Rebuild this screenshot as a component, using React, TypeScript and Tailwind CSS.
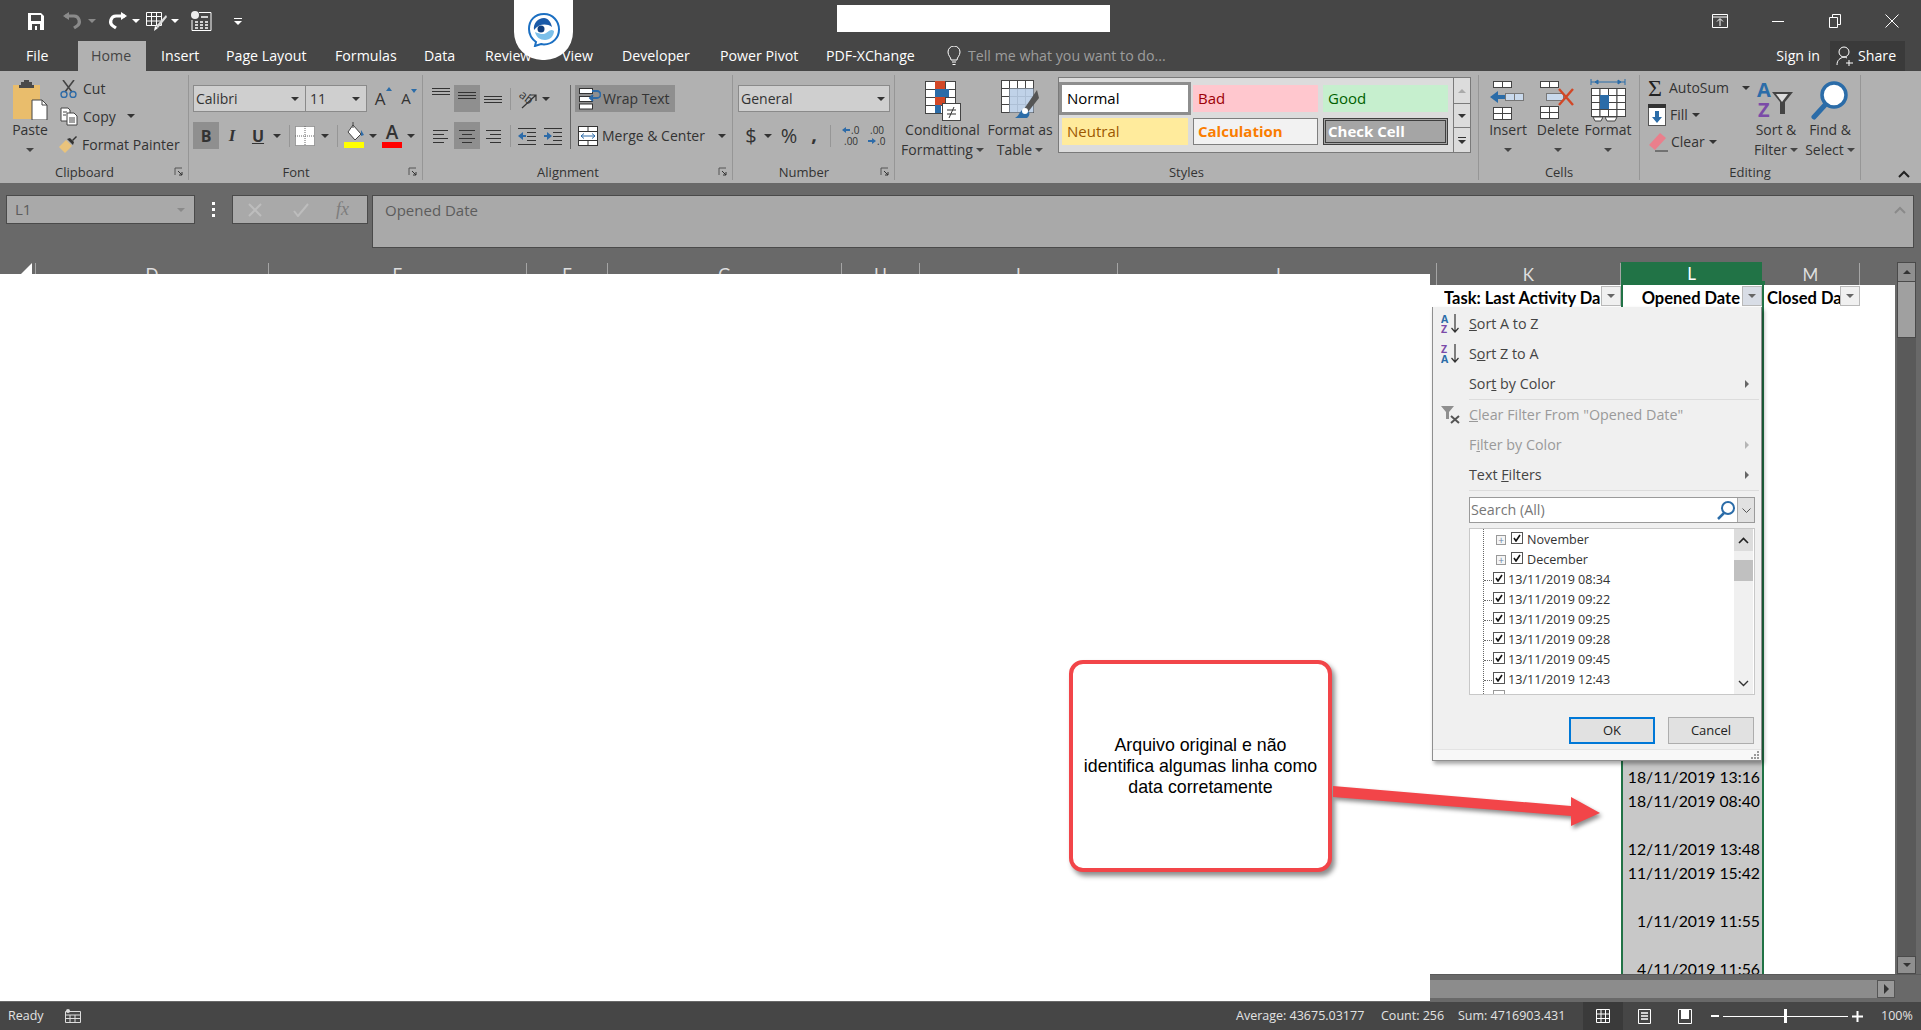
import { ReactNode } from "react";

function Caret({ className = "" }: { className?: string }) {
  return (
    <svg width="8" height="4" viewBox="0 0 8 4" className={`shrink-0 ${className}`}>
      <path d="M0 0h8L4 4z" fill="currentColor" />
    </svg>
  );
}

function Launcher() {
  return (
    <svg width="10" height="10" viewBox="0 0 10 10" className="shrink-0">
      <path d="M1 1h7M1 1v7" stroke="#555" fill="none" />
      <path d="M4 4l4 4M8 5v3H5" stroke="#333" fill="none" />
    </svg>
  );
}

function Group({ label, launcher, className, bodyClass = "", children }: { label: string; launcher?: boolean; className: string; bodyClass?: string; children: ReactNode }) {
  return (
    <div className={`flex flex-col border-r border-[#969696] ${className}`}>
      <div className={`flex-1 flex min-h-0 ${bodyClass}`}>{children}</div>
      <div className="h-[16px] flex items-center text-[13px] leading-[16px] text-[#333]">
        <span className="flex-1 text-center">{label}</span>
        {launcher && <span className="w-[19px] flex justify-center"><Launcher /></span>}
      </div>
    </div>
  );
}

function BigBtn({ icon, line1, line2, caret, className }: { icon: ReactNode; line1: string; line2?: string; caret?: boolean; className: string }) {
  return (
    <div className={`flex flex-col items-center pt-[4px] ${className}`}>
      <div className="h-[41px] flex items-center justify-center">{icon}</div>
      <div className="h-[20px] leading-[20px] whitespace-nowrap">{line1}</div>
      <div className="h-[20px] leading-[20px] whitespace-nowrap flex items-center gap-[3px]">
        {line2}
        {caret && <Caret className="text-[#444]" />}
      </div>
    </div>
  );
}

function VSep({ className = "" }: { className?: string }) {
  return <div className={`w-px h-[22px] bg-[#969696] shrink-0 ${className}`} />;
}

function AlignLines({ kind }: { kind: "top" | "mid" | "bot" | "left" | "center" | "right" }) {
  const y = kind === "top" ? [1, 4, 7] : kind === "mid" ? [5, 8, 11] : kind === "bot" ? [9, 12, 15] : [2, 6, 10, 14];
  if (kind === "top" || kind === "mid" || kind === "bot") {
    return (
      <svg width="18" height="16" viewBox="0 0 18 16">
        {y.map((v, i) => <path key={i} d={`M0 ${v}.5h18`} stroke="#333" />)}
      </svg>
    );
  }
  const xs: Record<string, number[][]> = {
    left: [[0, 15], [0, 11], [0, 15], [0, 11]],
    center: [[0, 16], [3, 13], [0, 16], [3, 13]],
    right: [[1, 16], [5, 16], [1, 16], [5, 16]],
  };
  return (
    <svg width="16" height="16" viewBox="0 0 16 16">
      {y.map((v, i) => <path key={i} d={`M${xs[kind][i][0]} ${v}.5H${xs[kind][i][1]}`} stroke="#333" />)}
    </svg>
  );
}

function WhiteGrid({ x, y, cols, rows, w, h }: { x: number; y: number; cols: number; rows: number; w: number; h: number }) {
  const cells = [];
  for (let r = 0; r < rows; r++) {
    for (let c = 0; c < cols; c++) {
      cells.push(<rect key={`${r}-${c}`} x={x + c * w + 0.5} y={y + r * h + 0.5} width={w} height={h} fill="#fff" stroke="#444" strokeWidth="1" />);
    }
  }
  return <g>{cells}</g>;
}

function PasteIcon() {
  return (
    <svg width="36" height="40" viewBox="0 0 36 40">
      <rect x="1" y="5" width="27" height="34" fill="#e9bd6c" />
      <path d="M9 5V2h3V0h5v2h3v3h2v3H7V5z" fill="#4a4a4a" />
      <path d="M20 20h10l5 5v15H20z" fill="#fff" stroke="#444" />
      <path d="M30 20v5h5" fill="none" stroke="#444" />
    </svg>
  );
}

function ScissorsIcon() {
  return (
    <svg width="18" height="18" viewBox="0 0 18 18">
      <path d="M3 0l9 12M14 0L5 12" stroke="#444" strokeWidth="1.6" />
      <circle cx="4" cy="14.5" r="3" fill="none" stroke="#2d6ba8" strokeWidth="1.4" />
      <circle cx="13" cy="14.5" r="3" fill="none" stroke="#2d6ba8" strokeWidth="1.4" />
    </svg>
  );
}

function CopyIcon() {
  return (
    <svg width="18" height="19" viewBox="0 0 18 19">
      <path d="M1 1h7l2 2v11H1z" fill="#fff" stroke="#444" />
      <path d="M7 6h7l3 3v9H7z" fill="#fff" stroke="#444" />
      <path d="M3 5h4M3 8h3M9 11h6M9 13h6M9 15h6" stroke="#444" />
    </svg>
  );
}

function BrushIcon() {
  return (
    <svg width="21" height="20" viewBox="0 0 21 20">
      <path d="M1 13l7-7 6 6-7 7z" fill="#e9c37c" />
      <path d="M9 5l3-1 4 4-1 3z" fill="#333" />
      <path d="M14 6l4-4 1 1-4 4z" fill="#333" />
    </svg>
  );
}

function FillBucketIcon() {
  return (
    <svg width="22" height="27" viewBox="0 0 22 27">
      <path d="M9 3l8 9-6 6-7-8z" fill="#fff" stroke="#444" />
      <path d="M9 0v6" stroke="#444" />
      <path d="M17 8l3 5-3 1z" fill="#2d6ba8" />
      <rect x="0" y="20" width="20" height="6" fill="#ffff00" />
    </svg>
  );
}

function OrientIcon() {
  return (
    <svg width="24" height="24" viewBox="0 0 24 24" className="overflow-visible">
      <text x="3" y="13" fontSize="12" fill="#333" transform="rotate(38 8 10)" fontFamily="Open Sans">ab</text>
      <path d="M6 21L20 8M14 8h6v6" stroke="#333" fill="none" strokeWidth="1.2" />
    </svg>
  );
}

function IndentIcon({ out }: { out?: boolean }) {
  return (
    <svg width="20" height="20" viewBox="0 0 20 20">
      {[2, 6, 10, 14, 18].map((y) => <path key={y} d={`M${y === 2 || y === 18 ? 1 : 10} ${y}.5H19`} stroke="#333" />)}
      {out ? <path d="M1 10l5-4v3h3v2H6v3z" fill="#2d6ba8" /> : <path d="M9 10L4 6v3H1v2h3v3z" fill="#2d6ba8" />}
    </svg>
  );
}

function WrapIcon() {
  return (
    <svg width="22" height="22" viewBox="0 0 22 22">
      <rect x="0.5" y="0.5" width="13" height="5" fill="#fff" stroke="#333" />
      <rect x="0.5" y="8.5" width="13" height="5" fill="#fff" stroke="#333" />
      <rect x="0.5" y="16" width="13" height="5" fill="#fff" stroke="#333" />
      <path d="M13 3h5a3 3 0 0 1 0 7h-6M14 7l-3 3 3 3" stroke="#2d6ba8" strokeWidth="1.8" fill="none" />
    </svg>
  );
}

function MergeIcon() {
  return (
    <svg width="20" height="20" viewBox="0 0 20 20">
      <rect x="0.5" y="0.5" width="19" height="19" fill="#fff" stroke="#333" />
      <path d="M.5 5.5h19M.5 14.5h19M10 .5v5M10 14.5v5" stroke="#333" />
      <path d="M3 10h14M6 7.5L3 10l3 2.5M14 7.5l3 2.5-3 2.5" stroke="#2d6ba8" fill="none" />
    </svg>
  );
}

function DecIcon({ more }: { more?: boolean }) {
  return (
    <svg width="20" height="24" viewBox="0 0 20 24" fontFamily="Open Sans" fontSize="10" fill="#333" className="overflow-visible">
      {more ? (
        <g>
          <path d="M1 6l4-3v2h4v2H5v2z" fill="#2d6ba8" />
          <text x="10" y="10">.0</text>
          <text x="3" y="21">.00</text>
        </g>
      ) : (
        <g>
          <text x="3" y="10">.00</text>
          <path d="M9 17l-4 3v-2H1v-2h4v-2z" fill="#2d6ba8" />
          <text x="10" y="21">.0</text>
        </g>
      )}
    </svg>
  );
}

function CondIcon() {
  return (
    <svg width="38" height="42" viewBox="0 0 38 42">
      <WhiteGrid x={1} y={2} cols={3} rows={4} w={10} h={8} />
      <rect x="11" y="2" width="10" height="8" fill="#d24726" />
      <rect x="11" y="10" width="14" height="8" fill="#2b6ca8" />
      <rect x="11" y="18" width="10" height="8" fill="#d24726" />
      <rect x="11" y="26" width="6" height="8" fill="#2b6ca8" />
      <rect x="18.5" y="24.5" width="18" height="17" fill="#fff" stroke="#444" />
      <path d="M23 31h9M23 35h9M30 28l-5 11" stroke="#333" />
    </svg>
  );
}

function TableIcon() {
  return (
    <svg width="40" height="42" viewBox="0 0 40 42">
      <WhiteGrid x={1} y={1} cols={4} rows={4} w={8} h={8} />
      <rect x="9.5" y="9.5" width="24" height="24" fill="#b9cde6" opacity="0.9" />
      <path d="M37 11L24 30l4 3 11-14z" fill="#555" />
      <path d="M24 30c-4 1-4 6-9 9h12c3-2 3-5 1-7z" fill="#2b6ca8" />
      <circle cx="25" cy="32" r="3" fill="#fff" />
    </svg>
  );
}

function InsertIcon() {
  return (
    <svg width="38" height="42" viewBox="0 0 38 42">
      <WhiteGrid x={4} y={2} cols={2} rows={1} w={9} h={6} />
      <WhiteGrid x={4} y={28} cols={2} rows={2} w={9} h={6} />
      <rect x="16.5" y="14.5" width="18" height="7" fill="#c9d9ec" stroke="#777" />
      <path d="M25.5 14.5v7" stroke="#777" />
      <path d="M1 18l8-6v4h7v4H9v4z" fill="#2b6ca8" />
    </svg>
  );
}

function DeleteIcon() {
  return (
    <svg width="38" height="42" viewBox="0 0 38 42">
      <WhiteGrid x={1} y={2} cols={2} rows={1} w={9} h={6} />
      <WhiteGrid x={1} y={27} cols={2} rows={2} w={9} h={6} />
      <rect x="7.5" y="14.5" width="17" height="7" fill="#c9d9ec" stroke="#777" />
      <path d="M20 10l14 16M34 10L20 26" stroke="#d24726" strokeWidth="2.4" />
    </svg>
  );
}

function FormatIcon() {
  return (
    <svg width="36" height="44" viewBox="0 0 36 44">
      <path d="M1 4h34M1 1v6M35 1v6M5 4l3-2v4zM31 4l-3-2v4z" stroke="#2b6ca8" fill="#2b6ca8" strokeWidth="1" />
      <WhiteGrid x={1} y={10} cols={4} rows={4} w={8.5} h={7} />
      <rect x="10" y="17" width="9" height="14" fill="#2b6ca8" />
      <path d="M3 39h10l-2 4H5zM15 39h12l-2 4H17z" fill="#fff" stroke="#444" />
    </svg>
  );
}

function FillDownIcon() {
  return (
    <svg width="18" height="22" viewBox="0 0 18 22">
      <rect x="0.5" y="0.5" width="17" height="21" fill="#fff" stroke="#555" />
      <rect x="0" y="0" width="18" height="4" fill="#333" />
      <path d="M7 7h4v6h3l-5 6-5-6h3z" fill="#2b6ca8" />
    </svg>
  );
}

function EraserIcon() {
  return (
    <svg width="20" height="20" viewBox="0 0 20 20">
      <path d="M1 13L12 1l6 5L7 18z" fill="#ea7f8c" />
      <path d="M7 19h13" stroke="#333" />
    </svg>
  );
}

function SortFilterIcon() {
  return (
    <svg width="38" height="40" viewBox="0 0 38 40" fontFamily="Open Sans" fontWeight="700" fontSize="20" className="overflow-visible">
      <text x="0" y="17" fill="#2b6ca8">A</text>
      <text x="1" y="37" fill="#7b4ba8">Z</text>
      <path d="M15 12h21l-8 10v12h-5V22z" fill="#444" />
      <path d="M19 14h12l-6 8z" fill="#ddd" />
    </svg>
  );
}

function FindIcon() {
  return (
    <svg width="38" height="42" viewBox="0 0 38 42">
      <circle cx="23" cy="16" r="12" fill="#fff" stroke="#2b6ca8" strokeWidth="3.5" />
      <path d="M14 26L3 38" stroke="#2b6ca8" strokeWidth="5" strokeLinecap="round" />
    </svg>
  );
}

function Ribbon() {
  return (
    <div className="h-[112px] bg-[#b1b1b1] flex pt-[4px] pb-[3px] text-[14px] text-[#333] shrink-0">
      <Group label="Clipboard" launcher className="w-[189px]">
        <BigBtn className="w-[60px]" icon={<PasteIcon />} line1="Paste" caret />
        <div className="flex flex-col">
          <div className="h-[27px] flex items-center gap-[5px]"><ScissorsIcon /><span>Cut</span></div>
          <div className="h-[28px] flex items-center gap-[5px]"><CopyIcon /><span>Copy</span><Caret className="ml-[6px]" /></div>
          <div className="h-[28px] flex items-center gap-[3px] -ml-[2px]"><BrushIcon /><span className="whitespace-nowrap">Format Painter</span></div>
        </div>
      </Group>

      <Group label="Font" launcher className="w-[234px]" bodyClass="flex-col pl-[4px] pt-[10px]">
        <div className="flex h-[27px] items-center">
          <div className="w-[113px] h-full bg-[#cfcfcf] border border-[#8a8a8a] flex items-center justify-between pl-[2px] pr-[6px]">Calibri<Caret /></div>
          <div className="w-[61px] h-full bg-[#cfcfcf] border border-[#8a8a8a] border-l-0 flex items-center justify-between pl-[4px] pr-[6px]">11<Caret /></div>
          <div className="w-[26px] text-center text-[17px] relative">A<span className="absolute right-[1px] top-[1px] border-x-[3px] border-b-[4px] border-x-transparent border-b-[#2b6ca8]" /></div>
          <div className="w-[26px] text-center text-[15px] relative">A<span className="absolute right-[2px] top-[2px] border-x-[3px] border-t-[4px] border-x-transparent border-t-[#2b6ca8]" /></div>
        </div>
        <div className="flex h-[27px] items-center mt-[10px]">
          <div className="w-[26px] h-full bg-[#8f8f8f] flex items-center justify-center font-bold text-[16px]">B</div>
          <div className="w-[26px] text-center italic font-bold text-[17px] font-['Liberation_Serif']">I</div>
          <div className="w-[26px] text-center underline font-bold text-[16px]">U</div>
          <div className="w-[12px] flex justify-center"><Caret /></div>
          <VSep className="ml-[6px]" />
          <svg width="20" height="20" viewBox="0 0 20 20" className="ml-[5px]">
            <rect x="0.5" y="0.5" width="19" height="19" fill="#fff" stroke="#666" strokeDasharray="1 1" />
            <path d="M10 0v20M0 10h20" stroke="#666" strokeDasharray="1 1" />
          </svg>
          <div className="w-[17px] flex justify-center ml-[1px]"><Caret /></div>
          <VSep className="ml-[4px]" />
          <span className="ml-[6px]"><FillBucketIcon /></span>
          <div className="w-[17px] flex justify-center -ml-[2px]"><Caret /></div>
          <div className="w-[22px] flex flex-col items-center">
            <span className="text-[19px] leading-[19px] font-semibold">A</span>
            <span className="w-[20px] h-[6px] bg-[#ff0000]" />
          </div>
          <div className="w-[16px] flex justify-center"><Caret /></div>
        </div>
      </Group>

      <Group label="Alignment" launcher className="w-[310px]" bodyClass="pl-[4px] pt-[10px]">
        <div className="w-[144px] h-[64px] flex flex-col border-r border-[#666]">
          <div className="flex h-[27px] items-center">
            <div className="w-[27px] h-full flex justify-center pt-[2px]"><AlignLines kind="top" /></div>
            <div className="w-[26px] h-full bg-[#8f8f8f] flex justify-center pt-[2px]"><AlignLines kind="mid" /></div>
            <div className="w-[26px] h-full flex justify-center pt-[2px]"><AlignLines kind="bot" /></div>
            <VSep className="ml-[4px]" />
            <span className="ml-[5px]"><OrientIcon /></span>
            <div className="w-[11px] flex justify-center"><Caret /></div>
          </div>
          <div className="flex h-[27px] items-center mt-[10px]">
            <div className="w-[27px] h-full flex items-center justify-center"><AlignLines kind="left" /></div>
            <div className="w-[26px] h-full bg-[#8f8f8f] flex items-center justify-center"><AlignLines kind="center" /></div>
            <div className="w-[26px] h-full flex items-center justify-center"><AlignLines kind="right" /></div>
            <VSep className="ml-[4px]" />
            <span className="ml-[6px]"><IndentIcon out /></span>
            <span className="ml-[6px]"><IndentIcon /></span>
          </div>
        </div>
        <div className="flex flex-col pl-[4px]">
          <div className="h-[27px] w-[100px] bg-[#8f8f8f] flex items-center gap-[2px] pl-[4px] whitespace-nowrap"><WrapIcon /><span>Wrap Text</span></div>
          <div className="h-[27px] flex items-center gap-[4px] mt-[10px] pl-[3px] whitespace-nowrap"><MergeIcon /><span>Merge &amp; Center</span><Caret className="ml-[9px]" /></div>
        </div>
      </Group>

      <Group label="Number" launcher className="w-[162px]" bodyClass="flex-col pl-[5px] pt-[10px]">
        <div className="w-[152px] h-[27px] bg-[#cfcfcf] border border-[#8a8a8a] flex items-center justify-between pl-[2px] pr-[4px]">General<Caret /></div>
        <div className="flex h-[27px] items-center mt-[10px]">
          <span className="w-[26px] text-center text-[20px]">$</span>
          <div className="w-[12px] flex justify-center -ml-[2px]"><Caret /></div>
          <span className="w-[26px] text-center text-[20px] ml-[2px]">%</span>
          <span className="w-[24px] text-center text-[20px] font-bold leading-[20px] -mt-[4px]">,</span>
          <VSep className="ml-[4px]" />
          <span className="ml-[10px]"><DecIcon more /></span>
          <span className="ml-[6px]"><DecIcon /></span>
        </div>
      </Group>

      <Group label="Styles" className="w-[584px]" bodyClass="pt-[2px]">
        <BigBtn className="w-[87px] pl-[8px] -mt-[2px]" icon={<CondIcon />} line1="Conditional" line2="Formatting" caret />
        <BigBtn className="w-[76px] -mt-[2px]" icon={<TableIcon />} line1="Format as" line2="Table" caret />
        <div className="w-[413px] h-[76px] bg-[#dcdcdc] border border-[#7a7a7a] flex text-[15px]">
          <div className="flex-1 grid grid-cols-[126px_125px_125px] grid-rows-[27px_27px] gap-x-[5px] gap-y-[6px] pl-[3px] pt-[7px]">
            <div className="bg-white text-black outline-[3px] outline-solid outline-[#8e8e8e] flex items-center pl-[5px]">Normal</div>
            <div className="bg-[#ffc7ce] text-[#9c0006] flex items-center pl-[5px]">Bad</div>
            <div className="bg-[#c6efce] text-[#006100] flex items-center pl-[5px]">Good</div>
            <div className="bg-[#ffeb9c] text-[#9c5700] flex items-center pl-[5px]">Neutral</div>
            <div className="bg-[#f2f2f2] border border-[#7f7f7f] text-[#fa7d00] font-bold flex items-center pl-[4px]">Calculation</div>
            <div className="bg-[#a5a5a5] border-[3px] border-double border-[#3f3f3f] text-white font-bold flex items-center pl-[2px]">Check Cell</div>
          </div>
          <div className="w-[17px] flex flex-col border-l border-[#7a7a7a] shrink-0">
            <div className="h-[26px] flex items-center justify-center text-[#aaa] border-b border-[#7a7a7a]"><Caret className="rotate-180" /></div>
            <div className="h-[24px] flex items-center justify-center border-b border-[#7a7a7a]"><Caret /></div>
            <div className="flex-1 flex flex-col items-center justify-center gap-[2px]"><span className="w-[8px] h-px bg-[#333]" /><Caret /></div>
          </div>
        </div>
      </Group>

      <Group label="Cells" className="w-[161px]" bodyClass="pl-[4px]">
        <BigBtn className="w-[50px]" icon={<InsertIcon />} line1="Insert" caret />
        <BigBtn className="w-[50px]" icon={<DeleteIcon />} line1="Delete" caret />
        <BigBtn className="w-[50px]" icon={<FormatIcon />} line1="Format" caret />
      </Group>

      <Group label="Editing" className="w-[221px]">
        <div className="w-[108px] pl-[8px] flex flex-col -mt-[1px]">
          <div className="h-[27px] flex items-center gap-[7px]">
            <span className="w-[18px] text-[24px] leading-[24px] text-center font-['Liberation_Serif'] text-[#222]">Σ</span>
            <span>AutoSum</span><Caret className="ml-[6px]" />
          </div>
          <div className="h-[27px] flex items-center gap-[4px]"><FillDownIcon /><span>Fill</span><Caret /></div>
          <div className="h-[27px] flex items-center gap-[4px]"><EraserIcon /><span className="-ml-[1px]">Clear</span><Caret /></div>
        </div>
        <BigBtn className="w-[56px]" icon={<SortFilterIcon />} line1="Sort &" line2="Filter" caret />
        <BigBtn className="w-[52px]" icon={<FindIcon />} line1="Find &" line2="Select" caret />
      </Group>

      <div className="flex-1 flex items-end justify-end pr-[11px] pb-[2px]">
        <svg width="12" height="8" viewBox="0 0 12 8"><path d="M1 7l5-5 5 5" stroke="#222" strokeWidth="2" fill="none" /></svg>
      </div>
    </div>
  );
}

const tabs = [
  { name: "File", cls: "w-[78px] pl-[26px]" },
  { name: "Home", cls: "w-[68px] pl-[13px] bg-[#b1b1b1] text-[#444]" },
  { name: "Insert", cls: "w-[65px] pl-[15px]" },
  { name: "Page Layout", cls: "w-[109px] pl-[15px]" },
  { name: "Formulas", cls: "w-[89px] pl-[15px]" },
  { name: "Data", cls: "w-[61px] pl-[15px]" },
  { name: "Review", cls: "w-[77px] pl-[15px]" },
  { name: "View", cls: "w-[60px] pl-[15px]" },
  { name: "Developer", cls: "w-[98px] pl-[15px]" },
  { name: "Power Pivot", cls: "w-[106px] pl-[15px]" },
  { name: "PDF-XChange", cls: "w-[136px] pl-[15px]" },
];

function TitleBar() {
  return (
    <div className="h-[41px] bg-[#464646] flex items-center shrink-0 text-white pt-[1px]">
      <svg width="16" height="17" viewBox="0 0 16 17" className="ml-[28px]">
        <path d="M0 0h13l3 3v14H0z" fill="#fff" />
        <rect x="3" y="2" width="10" height="6" fill="#464646" />
        <rect x="4" y="11" width="8" height="6" fill="#464646" />
        <rect x="7" y="13" width="2" height="4" fill="#fff" />
      </svg>
      <svg width="20" height="18" viewBox="0 0 20 18" className="ml-[19px]">
        <path d="M2 4h9a5.5 5.5 0 0 1 3 10l-3 2" stroke="#8a8a8a" strokeWidth="3.2" fill="none" />
        <path d="M0 4l6-4v8z" fill="#8a8a8a" />
      </svg>
      <Caret className="ml-[5px] text-[#8a8a8a]" />
      <svg width="20" height="18" viewBox="0 0 20 18" className="ml-[11px]">
        <path d="M18 4H9a5.5 5.5 0 0 0-3 10l3 2" stroke="#fff" strokeWidth="3.2" fill="none" />
        <path d="M20 4l-6-4v8z" fill="#fff" />
      </svg>
      <Caret className="ml-[5px]" />
      <svg width="22" height="20" viewBox="0 0 22 20" className="ml-[6px]">
        <path d="M.5 1.5h15v13H.5zM5.500 1.500v13M10.500 1.500v13M.5 5.500h15M.5 10h15" stroke="#fff" fill="none" />
        <path d="M20 4L10 15l2 2 9-11z" fill="#ddd" />
        <path d="M9 15l3 2-4 3z" fill="#fff" />
      </svg>
      <Caret className="ml-[3px]" />
      <svg width="21" height="20" viewBox="0 0 21 20" className="ml-[12px]">
        <circle cx="4" cy="4" r="4" fill="#eee" />
        <path d="M8 1.500h12V19.500H1V9" stroke="#fff" fill="none" />
        <path d="M4 11h3M9 11h3M14 11h3M4 14h3M9 14h3M14 14h3M4 17h3M9 17h3M14 17h3M10 6h7" stroke="#fff" strokeWidth="1.6" />
      </svg>
      <span className="ml-[22px] flex flex-col items-center gap-[2px]">
        <span className="w-[8px] h-px bg-white" />
        <Caret />
      </span>
      <div className="ml-auto flex items-center">
        <svg width="16" height="14" viewBox="0 0 16 14" className="mr-[44px]">
          <path d="M.5.500h15v13H.5zM.5 3h15M8 12V5M5 7.500L8 4.500l3 3" stroke="#fff" fill="none" />
        </svg>
        <span className="w-[12px] h-px bg-white mr-[45px]" />
        <svg width="12" height="14" viewBox="0 0 12 14" className="mr-[44px]">
          <path d="M.5 3.500h8v10h-8zM3.500 3V.500h8v10H9" stroke="#fff" fill="none" />
        </svg>
        <svg width="14" height="14" viewBox="0 0 14 14" className="mr-[22px]">
          <path d="M.5.500l13 13M13.500.500l-13 13" stroke="#fff" />
        </svg>
      </div>
    </div>
  );
}

function TabRow() {
  return (
    <div className="h-[30px] bg-[#464646] flex items-stretch text-white text-[14.2px] shrink-0">
      {tabs.map((t) => (
        <div key={t.name} className={`flex items-center whitespace-nowrap ${t.cls}`}>{t.name}</div>
      ))}
      <div className="flex items-center gap-[7px] text-[#9d9d9d]">
        <svg width="14" height="20" viewBox="0 0 14 20">
          <path d="M4 14c0-3-3-4-3-8a6 6 0 0 1 12 0c0 4-3 5-3 8z" stroke="#fff" fill="none" />
          <path d="M5 16h4M5.500 18.500h3" stroke="#fff" />
        </svg>
        <span>Tell me what you want to do...</span>
      </div>
      <div className="ml-auto flex items-center">
        <span className="mr-[10px]">Sign in</span>
        <div className="w-[75px] h-full bg-[#3a3a3a] flex items-center gap-[4px] pl-[6px] mr-[16px]">
          <svg width="18" height="20" viewBox="0 0 18 20">
            <circle cx="8" cy="6" r="5" stroke="#fff" fill="none" />
            <path d="M1 19c0-5 3-7 7-8 1 0 2 .500 3 1M13 14v6M10 17h7" stroke="#fff" fill="none" />
          </svg>
          <span>Share</span>
        </div>
      </div>
    </div>
  );
}

function FormulaArea() {
  return (
    <div className="h-[79px] bg-[#696969] flex items-start pt-[12px] text-[#5c5c5c] text-[15px] shrink-0">
      <div className="ml-[6px] w-[189px] h-[29px] bg-[#a9a9a9] border border-[#4a4a4a] flex items-center justify-between pl-[8px] pr-[9px]">L1<Caret className="text-[#8a8a8a]" /></div>
      <div className="w-[37px] h-[29px] flex flex-col items-center justify-center gap-[3px]">
        <span className="w-[3px] h-[3px] bg-white" /><span className="w-[3px] h-[3px] bg-white" /><span className="w-[3px] h-[3px] bg-white" />
      </div>
      <div className="w-[136px] h-[29px] bg-[#a9a9a9] border border-[#4a4a4a] flex items-center text-[#bdbdbd]">
        <svg width="14" height="14" viewBox="0 0 14 14" className="ml-[15px]"><path d="M1 1l12 12M13 1L1 13" stroke="#bdbdbd" strokeWidth="2" /></svg>
        <svg width="16" height="14" viewBox="0 0 16 14" className="ml-[31px]"><path d="M1 8l4 5L15 1" stroke="#bdbdbd" strokeWidth="2" fill="none" /></svg>
        <span className="ml-[27px] italic font-['Liberation_Serif'] text-[18px] text-[#7d7d7d]">fx</span>
      </div>
      <div className="ml-[4px] w-[1542px] h-[53px] bg-[#a9a9a9] border border-[#4a4a4a] flex justify-between pl-[12px] pr-[7px] pt-[3px]">
        <span>Opened Date</span>
        <svg width="12" height="8" viewBox="0 0 12 8" className="mt-[7px]"><path d="M1 7l5-5 5 5" stroke="#8a8a8a" strokeWidth="2" fill="none" /></svg>
      </div>
    </div>
  );
}

const headers = [
  { l: "", cls: "w-[36px]" },
  { l: "D", cls: "w-[233px]" },
  { l: "E", cls: "w-[258px]" },
  { l: "F", cls: "w-[81px]" },
  { l: "G", cls: "w-[234px]" },
  { l: "H", cls: "w-[78px]" },
  { l: "I", cls: "w-[198px]" },
  { l: "J", cls: "w-[319px]" },
  { l: "K", cls: "w-[184px]" },
];

const dateRows = ["18/11/2019 13:16", "18/11/2019 08:40", "", "12/11/2019 13:48", "11/11/2019 15:42", "", "1/11/2019 11:55", "", "4/11/2019 11:56"];

function FilterBtn({ cls = "bg-[#f0f0f0]" }: { cls?: string }) {
  return (
    <span className={`w-[20px] h-[20px] border border-[#b9b9b9] flex items-center justify-center shrink-0 text-[#666] ${cls}`}>
      <Caret />
    </span>
  );
}

function Sheet() {
  return (
    <div className="flex-1 min-h-0 flex flex-col bg-[#696969]">
      <div className="flex-1 min-h-0 flex">
        <div className="w-[1895px] flex flex-col">
          <div className="h-[23px] flex shrink-0 text-[#dedede] text-[17px] font-['Lato'] overflow-hidden">
            {headers.map((h) => (
              <div key={h.l} className={`${h.cls} text-center leading-[24px] border-r border-[#a5a5a5] mt-[1px]`}>
                {h.l === "" && <span className="block ml-[20px] w-0 h-0 border-l-[12px] border-b-[12px] border-l-transparent border-b-white" />}
                {h.l}
              </div>
            ))}
            <div className="relative w-[141px] bg-[#217346] text-white text-center leading-[24px]">
              L
              <span className="absolute right-[-3px] bottom-[-1px] w-[5px] h-[5px] bg-[#217346]" />
            </div>
            <div className="w-[98px] text-center leading-[24px] border-r border-[#a5a5a5] mt-[1px]">M</div>
          </div>
          <div className="flex-1 min-h-0 flex bg-white text-black text-[16.5px] font-['Lato'] overflow-hidden">
            <div className="w-[1437px] shrink-0" />
            <div className="w-[184px] shrink-0 h-[22px] flex items-center font-bold pl-[7px] overflow-hidden whitespace-nowrap">
              <span className="flex-1 overflow-hidden leading-[18px] pt-[4px]">Task: Last Activity Da</span>
              <FilterBtn />
            </div>
            <div className="w-[143px] shrink-0 flex flex-col border-x-2 border-[#217346] bg-[#c8c8c8]">
              <div className="h-[22px] shrink-0 bg-white flex items-center justify-end font-bold">
                <span className="mr-[2px] leading-[18px] pt-[4px]">Opened Date</span>
                <FilterBtn cls="bg-[#d8dde6]" />
              </div>
              <div className="h-[458px] shrink-0" />
              {dateRows.map((d, i) => (
                <div key={i} className="h-[24px] shrink-0 leading-[24px] text-right pr-[2px] whitespace-nowrap text-[15.8px]">{d}</div>
              ))}
            </div>
            <div className="w-[96px] shrink-0 h-[22px] flex items-center font-bold pl-[3px] overflow-hidden whitespace-nowrap">
              <span className="flex-1 overflow-hidden leading-[18px] pt-[4px]">Closed Da</span>
              <FilterBtn />
            </div>
          </div>
        </div>
        <div className="flex-1 flex justify-center">
          <div className="w-[19px] ml-[-3px] h-full bg-[#5a5a5a] flex flex-col">
            <div className="h-[20px] bg-[#8f8f8f] border border-[#4a4a4a] flex items-center justify-center text-[#333]"><Caret className="rotate-180" /></div>
            <div className="h-[56px] bg-[#a0a0a0] border border-[#4a4a4a] border-t-0" />
            <div className="mt-auto h-[18px] bg-[#8f8f8f] border border-[#4a4a4a] flex items-center justify-center text-[#333]"><Caret /></div>
          </div>
        </div>
      </div>
      <div className="h-[28px] shrink-0 flex items-center border-t border-[#5a5a5a]">
        <div className="w-[1877px] h-[18px] bg-[#8c8c8c]" />
        <div className="w-[18px] h-[18px] bg-[#999] border border-[#555] flex items-center justify-center">
          <span className="w-0 h-0 border-l-[5px] border-y-[5px] border-y-transparent border-l-[#333]" />
        </div>
      </div>
    </div>
  );
}

function StatusBar() {
  return (
    <div className="h-[28px] bg-[#464646] flex items-center text-[#e3e3e3] text-[12.5px] shrink-0">
      <span className="ml-[8px]">Ready</span>
      <svg width="16" height="14" viewBox="0 0 16 14" className="ml-[21px]">
        <path d="M.5 2.500h15v11H.5zM.5 6h15M5 6v7M10 6v7M.5 9.500h15" stroke="#ddd" fill="none" />
        <circle cx="3" cy="2" r="2" fill="#ddd" />
      </svg>
      <div className="ml-auto flex items-center h-full">
        <span className="w-[145px] whitespace-nowrap">Average: 43675.03177</span>
        <span className="w-[77px] whitespace-nowrap">Count: 256</span>
        <span className="w-[125px] whitespace-nowrap">Sum: 4716903.431</span>
        <div className="w-[40px] h-full bg-[#3a3a3a] flex items-center justify-center">
          <svg width="14" height="14" viewBox="0 0 14 14"><path d="M.5.500h13v13H.5zM.5 5h13M.5 9.500h13M5 .500v13M9.500.500v13" stroke="#fff" fill="none" /></svg>
        </div>
        <div className="w-[42px] flex justify-center">
          <svg width="13" height="15" viewBox="0 0 13 15"><path d="M.5.500h12v14H.5z" stroke="#fff" fill="none" /><path d="M3 4h7M3 7h7M3 10h7" stroke="#fff" strokeWidth="1.400" /></svg>
        </div>
        <div className="w-[40px] flex justify-center">
          <svg width="14" height="15" viewBox="0 0 14 15"><path d="M.5.500h13v14H.5z" stroke="#fff" fill="none" /><rect x="3" y="0" width="8" height="10" fill="#fff" /></svg>
        </div>
        <span className="w-[8px] h-[2px] bg-white ml-[6px]" />
        <div className="w-[125px] h-px bg-white ml-[4px] flex items-center justify-center">
          <span className="w-[3px] h-[14px] bg-white" />
        </div>
        <svg width="11" height="11" viewBox="0 0 11 11" className="ml-[4px]"><path d="M0 5.500h11M5.500 0v11" stroke="#fff" strokeWidth="2" /></svg>
        <span className="w-[31px] ml-[18px] mr-[9px] text-right">100%</span>
      </div>
    </div>
  );
}

function MenuItem({ icon, arrow, dim, children }: { icon?: ReactNode; arrow?: boolean; dim?: boolean; children: ReactNode }) {
  return (
    <div className={`h-[30px] flex items-center ${dim ? "text-[#9a9a9a]" : "text-[#444]"}`}>
      <span className="w-[36px] flex justify-center">{icon}</span>
      <span className="flex-1 whitespace-nowrap">{children}</span>
      {arrow && <span className={`w-0 h-0 mr-[12px] border-l-[4px] border-y-[4px] border-y-transparent ${dim ? "border-l-[#b5b5b5]" : "border-l-[#666]"}`} />}
    </div>
  );
}

function SortIcon({ top, bottom }: { top: string; bottom: string }) {
  return (
    <svg width="20" height="22" viewBox="0 0 20 22" fontFamily="Open Sans" fontWeight="700" fontSize="10.500">
      <text x="0" y="9.500" fill={top === "A" ? "#2b6ca8" : "#7b4ba8"}>{top}</text>
      <text x="0" y="20" fill={top === "A" ? "#7b4ba8" : "#2b6ca8"}>{bottom}</text>
      <path d="M14 1v18M10.500 15l3.500 4 3.500-4" stroke="#333" fill="none" strokeWidth="1.200" />
    </svg>
  );
}

function CheckBox() {
  return (
    <span className="w-[12px] h-[12px] -mt-[4px] bg-white border border-[#555] flex items-center justify-center shrink-0">
      <svg width="8" height="8" viewBox="0 0 8 8"><path d="M1 4l2 3 4-6" stroke="#111" strokeWidth="1.600" fill="none" /></svg>
    </span>
  );
}

const months = ["November", "December"];
const stamps = ["13/11/2019 08:34", "13/11/2019 09:22", "13/11/2019 09:25", "13/11/2019 09:28", "13/11/2019 09:45", "13/11/2019 12:43"];

function FilterMenu() {
  return (
    <div className="absolute left-[1432px] top-[307px] w-[330px] h-[454px] bg-[#f0f0f0] border border-[#8f8f8f] border-t-0 shadow-[2px_3px_4px_rgba(0,0,0,0.35)] flex flex-col text-[14.3px] font-['Open_Sans'] pt-[2px]">
      <MenuItem icon={<SortIcon top="A" bottom="Z" />}><span className="underline">S</span>ort A to Z</MenuItem>
      <MenuItem icon={<SortIcon top="Z" bottom="A" />}>S<span className="underline">o</span>rt Z to A</MenuItem>
      <MenuItem arrow>Sor<span className="underline">t</span> by Color</MenuItem>
      <div className="h-px bg-[#dcdcdc] ml-[36px] mr-[2px]" />
      <MenuItem dim icon={
        <svg width="20" height="18" viewBox="0 0 20 18">
          <path d="M0 0h13L8 6v7H5V6z" fill="#8f8f8f" />
          <path d="M10 10l8 7M18 10l-8 7" stroke="#555" strokeWidth="2" />
        </svg>
      }><span className="underline">C</span>lear Filter From "Opened Date"</MenuItem>
      <MenuItem dim arrow>F<span className="underline">i</span>lter by Color</MenuItem>
      <MenuItem arrow>Text <span className="underline">F</span>ilters</MenuItem>
      <div className="h-px bg-[#dcdcdc] ml-[36px] mr-[2px]" />

      <div className="ml-[36px] w-[286px] h-[26px] mt-[6px] bg-white border border-[#9a9a9a] flex items-center pl-[1px] text-[#777]">
        <span className="flex-1 -mt-[1px]">Search (All)</span>
        <svg width="20" height="20" viewBox="0 0 20 20">
          <circle cx="12" cy="8" r="6" fill="none" stroke="#2b6ca8" strokeWidth="2" />
          <path d="M8 13l-6 6" stroke="#2b6ca8" strokeWidth="2.500" />
        </svg>
        <span className="w-[17px] h-full bg-[#e1e1e1] border-l border-[#aaa] flex items-center justify-center ml-[1px]">
          <svg width="9" height="5" viewBox="0 0 9 5"><path d="M.5.500l4 4 4-4" stroke="#555" fill="none" /></svg>
        </span>
      </div>

      <div className="ml-[36px] w-[286px] h-[167px] mt-[5px] bg-white border border-[#c8c8c8] flex text-[12.6px] text-[#333] overflow-hidden">
        <div className="flex-1 overflow-hidden">
          <div className="ml-[13px] border-l border-dotted border-[#666] h-full pt-[1px]">
            {months.map((m) => (
              <div key={m} className="h-[20px] flex items-center pl-[12px]">
                <span className="w-[10px] h-[10px] bg-[#f5f5f5] border border-[#999] flex items-center justify-center text-[#6a86a8] text-[10px] leading-none mr-[5px]">+</span>
                <CheckBox />
                <span className="ml-[4px]">{m}</span>
              </div>
            ))}
            {stamps.map((s) => (
              <div key={s} className="h-[20px] flex items-center">
                <span className="w-[8px] border-t border-dotted border-[#666] mr-[1px]" />
                <CheckBox />
                <span className="ml-[3px] whitespace-nowrap">{s}</span>
              </div>
            ))}
            <div className="ml-[9px] w-[12px] h-[12px] border border-[#999] bg-white" />
          </div>
        </div>
        <div className="w-[19px] mr-[1px] bg-[#f0f0f0] flex flex-col items-center shrink-0">
          <div className="w-full h-[22px] bg-[#dcdcdc] flex items-center justify-center">
            <svg width="11" height="7" viewBox="0 0 11 7"><path d="M1 6l4.500-4.500L10 6" stroke="#222" strokeWidth="1.600" fill="none" /></svg>
          </div>
          <div className="w-full h-[21px] bg-[#c0c0c0] mt-[9px]" />
          <div className="mt-auto h-[22px] flex items-center">
            <svg width="11" height="7" viewBox="0 0 11 7"><path d="M1 1l4.500 4.500L10 1" stroke="#333" strokeWidth="1.400" fill="none" /></svg>
          </div>
        </div>
      </div>

      <div className="flex justify-end gap-[13px] pr-[7px] mt-[22px] text-[13px] text-[#222]">
        <div className="w-[86px] h-[27px] bg-[#e1e1e1] border-2 border-[#0078d7] flex items-center justify-center">OK</div>
        <div className="w-[86px] h-[27px] bg-[#e1e1e1] border border-[#adadad] flex items-center justify-center">Cancel</div>
      </div>

      <div className="mt-auto h-[11px] bg-[#f8f8f8] border-t border-[#e3e3e3] flex justify-end items-end pr-[2px] pb-[1px]">
        <svg width="8" height="8" viewBox="0 0 8 8" fill="#9a9a9a">
          <rect x="6" y="0" width="2" height="2" /><rect x="3" y="3" width="2" height="2" /><rect x="6" y="3" width="2" height="2" />
          <rect x="0" y="6" width="2" height="2" /><rect x="3" y="6" width="2" height="2" /><rect x="6" y="6" width="2" height="2" />
        </svg>
      </div>
    </div>
  );
}

export default function App() {
  return (
    <div className="relative h-screen w-full overflow-hidden flex flex-col font-['Open_Sans',sans-serif]">
      <TitleBar />
      <TabRow />
      <Ribbon />
      <FormulaArea />
      <Sheet />
      <StatusBar />

      {/* blanked out parts of the screenshot */}
      <div className="absolute left-[837px] top-[5px] w-[273px] h-[27px] bg-white" />
      <div className="absolute left-0 top-[274px] w-[1430px] h-[727px] bg-white" />

      <div className="absolute left-[514px] top-0 w-[59px] h-[60px] bg-white rounded-b-[28px] flex items-center justify-center">
        <svg width="32" height="34" viewBox="0 0 32 34">
          <path d="M16 1C7 1 1 7 1 16c0 6 3 10 7 13l-1 4 6-2c1 .300 2 .400 3 .400 9 0 15-7 15-15S25 1 16 1z" fill="#fff" stroke="#1b6fc2" strokeWidth="2" />
          <path d="M16 5c-6 0-11 5-10 12 5-6 12-7 18-3-1-5-4-9-8-9z" fill="#1a5aa8" />
          <path d="M7 19c1 5 5 8 10 8 5 0 9-4 9-9-4-3-6 2-10 3-3 .500-6-1-9-2z" fill="#7cc0ea" />
          <circle cx="13" cy="16" r="3.500" fill="#123f7d" />
        </svg>
      </div>

      <FilterMenu />

      <div className="absolute left-[1069px] top-[660px] w-[263px] h-[212px] bg-white border-[4px] border-[#f24549] rounded-[14px] shadow-[3px_4px_5px_rgba(0,0,0,0.45)] flex items-center justify-center text-center text-black text-[17.8px] leading-[21px] font-['Liberation_Sans']">
        <p className="whitespace-nowrap">Arquivo original e não<br />identifica algumas linha como<br />data corretamente</p>
      </div>
      <svg width="272" height="52" viewBox="0 0 272 52" className="absolute left-[1333px] top-[780px] drop-shadow-[2px_3px_2px_rgba(0,0,0,0.45)]">
        <path d="M0 6L238 26V17L267 33 238 46V36L0 17z" fill="#f24549" />
      </svg>
    </div>
  );
}
